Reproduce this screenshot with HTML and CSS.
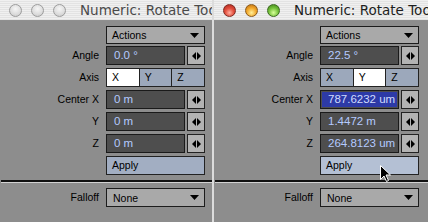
FILE: index.html
```html
<!DOCTYPE html>
<html>
<head>
<meta charset="utf-8">
<link rel="stylesheet" href="styles.css">
</head>
<body>
<div class="screen">
  <div class="win win-left">
    <div class="titlebar">
      <div class="lights">
        <span class="light off"></span><span class="light off"></span><span class="light off"></span>
      </div>
      <div class="title title-off">Numeric: Rotate Tool</div>
    </div>
    <div class="body">
      <div class="row row-actions"><div class="label"></div><div class="ctl"><div class="dropdown"><span>Actions</span><svg class="tri" width="9" height="5" viewBox="0 0 9 5"><path d="M0 0H9L4.5 5Z"/></svg></div></div></div>
      <div class="row row-angle"><div class="label">Angle</div><div class="ctl"><div class="field">0.0 °</div><div class="spin"><svg width="9" height="8" viewBox="0 0 9 8"><path d="M0 4L4 0V8Z M5 0L9 4L5 8Z"/></svg></div></div></div>
      <div class="row"><div class="label">Axis</div><div class="ctl"><div class="seg"><div class="seg-btn on">X</div><div class="seg-btn">Y</div><div class="seg-btn">Z</div></div></div></div>
      <div class="row"><div class="label">Center X</div><div class="ctl"><div class="field">0 m</div><div class="spin"><svg width="9" height="8" viewBox="0 0 9 8"><path d="M0 4L4 0V8Z M5 0L9 4L5 8Z"/></svg></div></div></div>
      <div class="row"><div class="label">Y</div><div class="ctl"><div class="field">0 m</div><div class="spin"><svg width="9" height="8" viewBox="0 0 9 8"><path d="M0 4L4 0V8Z M5 0L9 4L5 8Z"/></svg></div></div></div>
      <div class="row"><div class="label">Z</div><div class="ctl"><div class="field">0 m</div><div class="spin"><svg width="9" height="8" viewBox="0 0 9 8"><path d="M0 4L4 0V8Z M5 0L9 4L5 8Z"/></svg></div></div></div>
      <div class="row"><div class="label"></div><div class="ctl"><div class="btn">Apply</div></div></div>
      <div class="sep"></div>
      <div class="row row-falloff"><div class="label">Falloff</div><div class="ctl"><div class="dropdown dd-none"><span>None</span><svg class="tri" width="9" height="5" viewBox="0 0 9 5"><path d="M0 0H9L4.5 5Z"/></svg></div></div></div>
    </div>
  </div>
  <div class="divider"></div>
  <div class="win win-right">
    <div class="titlebar">
      <div class="lights">
        <span class="light red"></span><span class="light yellow"></span><span class="light green"></span>
      </div>
      <div class="title">Numeric: Rotate Tool</div>
    </div>
    <div class="body">
      <div class="row row-actions"><div class="label"></div><div class="ctl"><div class="dropdown"><span>Actions</span><svg class="tri" width="9" height="5" viewBox="0 0 9 5"><path d="M0 0H9L4.5 5Z"/></svg></div></div></div>
      <div class="row row-angle"><div class="label">Angle</div><div class="ctl"><div class="field">22.5 °</div><div class="spin"><svg width="9" height="8" viewBox="0 0 9 8"><path d="M0 4L4 0V8Z M5 0L9 4L5 8Z"/></svg></div></div></div>
      <div class="row"><div class="label">Axis</div><div class="ctl"><div class="seg"><div class="seg-btn">X</div><div class="seg-btn on">Y</div><div class="seg-btn">Z</div></div></div></div>
      <div class="row"><div class="label">Center X</div><div class="ctl"><div class="field sel">787.6232 um</div><div class="spin"><svg width="9" height="8" viewBox="0 0 9 8"><path d="M0 4L4 0V8Z M5 0L9 4L5 8Z"/></svg></div></div></div>
      <div class="row"><div class="label">Y</div><div class="ctl"><div class="field">1.4472 m</div><div class="spin"><svg width="9" height="8" viewBox="0 0 9 8"><path d="M0 4L4 0V8Z M5 0L9 4L5 8Z"/></svg></div></div></div>
      <div class="row"><div class="label">Z</div><div class="ctl"><div class="field">264.8123 um</div><div class="spin"><svg width="9" height="8" viewBox="0 0 9 8"><path d="M0 4L4 0V8Z M5 0L9 4L5 8Z"/></svg></div></div></div>
      <div class="row"><div class="label"></div><div class="ctl"><div class="btn btn-hover">Apply</div></div></div>
      <div class="sep"></div>
      <div class="row row-falloff"><div class="label">Falloff</div><div class="ctl"><div class="dropdown dd-none"><span>None</span><svg class="tri" width="9" height="5" viewBox="0 0 9 5"><path d="M0 0H9L4.5 5Z"/></svg></div></div></div>
    </div>
    <svg class="cursor" width="11" height="17" viewBox="0 0 11 17"><path d="M0.5 0.5V14.5L4 11L6.5 16.5L8.5 15.5L6 10H10.5Z" fill="#000" stroke="#fff" stroke-width="1"/></svg>
  </div>
</div>
</body>
</html>
```
FILE: styles.css
```css
* { box-sizing: border-box; }
html, body { margin: 0; padding: 0; }
body {
  width: 428px;
  height: 222px;
  overflow: hidden;
  background: #8d8d8d;
  font-family: "Liberation Sans", Arial, sans-serif;
}
.screen { display: flex; height: 222px; }
.win {
  position: relative;
  display: flex;
  flex-direction: column;
  background: #8d8d8d;
  overflow: hidden;
}
.win-left { width: 212px; }
.win-right { width: 214px; }
.divider { width: 2px; background: #dcdcdc; }

.titlebar {
  height: 21px;
  flex-shrink: 0;
  display: flex;
  align-items: center;
  padding-left: 9px;
  background: repeating-linear-gradient(#f0f0f0 0 1px, #e3e3e3 1px 2px);
  border-bottom: 1px solid #8f8f8f;
  overflow: hidden;
}
.lights { display: flex; gap: 9px; flex-shrink: 0; }
.light { width: 13px; height: 13px; border-radius: 50%; display: block; }
.light.off {
  background: radial-gradient(circle at 50% 35%, #f6f6f6 0, #dcdcdc 60%, #c4c4c4 100%);
  border: 1px solid #9c9c9c;
}
.light.red {
  background: radial-gradient(circle at 50% 70%, #ffb0a0 0, #e4503f 45%, #a9231a 100%);
  border: 1px solid #7e2a22;
}
.light.yellow {
  background: radial-gradient(circle at 50% 70%, #fff09a 0, #f2a72a 50%, #b86a12 100%);
  border: 1px solid #8a5a1a;
}
.light.green {
  background: radial-gradient(circle at 50% 70%, #d8ff9a 0, #74c23a 50%, #3c7f16 100%);
  border: 1px solid #3c6a20;
}
.title {
  margin-left: 14px;
  font-family: "DejaVu Sans", "Liberation Sans", sans-serif;
  font-size: 13.5px;
  color: #1e1e1e;
  white-space: nowrap;
}
.title-off { color: #4a4a4a; }

.body { display: flex; flex-direction: column; }
.row { display: flex; height: 19px; margin-top: 3px; flex-shrink: 0; }
.row-actions { height: 18px; margin-top: 5px; }
.row-angle { margin-top: 2px; }
.row-falloff { margin-top: 5px; }

.label {
  width: 100px;
  padding-right: 1px;
  text-align: right;
  font-size: 10.5px;
  line-height: 19px;
  color: #000;
  white-space: nowrap;
}
.ctl { margin-left: 6px; width: 99px; display: flex; gap: 2px; }

.dropdown {
  width: 99px;
  display: flex;
  align-items: center;
  justify-content: space-between;
  padding: 0 5px 0 5px;
  background: #a9a9a9;
  border: 1px solid #1c1c1c;
  font-size: 10.5px;
  color: #000;
}
.dd-none { padding-left: 6px; }
.tri { fill: #000; display: block; }

.field {
  flex: 1;
  background: #4e4e4e;
  border: 1px solid #1a1a1a;
  color: #b4caff;
  font-size: 11.5px;
  line-height: 17px;
  padding-left: 7px;
  white-space: nowrap;
  overflow: hidden;
}
.field.sel {
  background: #2d3aa6;
  box-shadow: inset 0 0 0 1px #4e4e4e;
  color: #d0dcff;
}
.spin {
  width: 18px;
  background: #b3b3b3;
  border: 1px solid #222;
  display: flex;
  align-items: center;
  justify-content: center;
}
.spin svg { fill: #000; display: block; }

.seg { display: flex; width: 99px; }
.seg-btn {
  flex: 1;
  background: #9ca8bb;
  border: 1px solid #222;
  margin-left: -1px;
  font-size: 10.5px;
  line-height: 17px;
  padding-left: 5px;
  color: #000;
}
.seg-btn:first-child { margin-left: 0; }
.seg-btn.on { background: #ffffff; }

.btn {
  width: 99px;
  background: #a2aec2;
  border: 1px solid #222;
  font-size: 10.5px;
  line-height: 17px;
  padding-left: 5px;
  color: #000;
}
.btn-hover { background: #b4c0d4; }

.sep {
  margin-top: 5px;
  margin-left: 1px;
  height: 3px;
  border-top: 2px solid #111;
  border-bottom: 1px solid #d2d2d2;
  flex-shrink: 0;
}

.cursor { position: absolute; left: 166px; top: 165px; }
```
